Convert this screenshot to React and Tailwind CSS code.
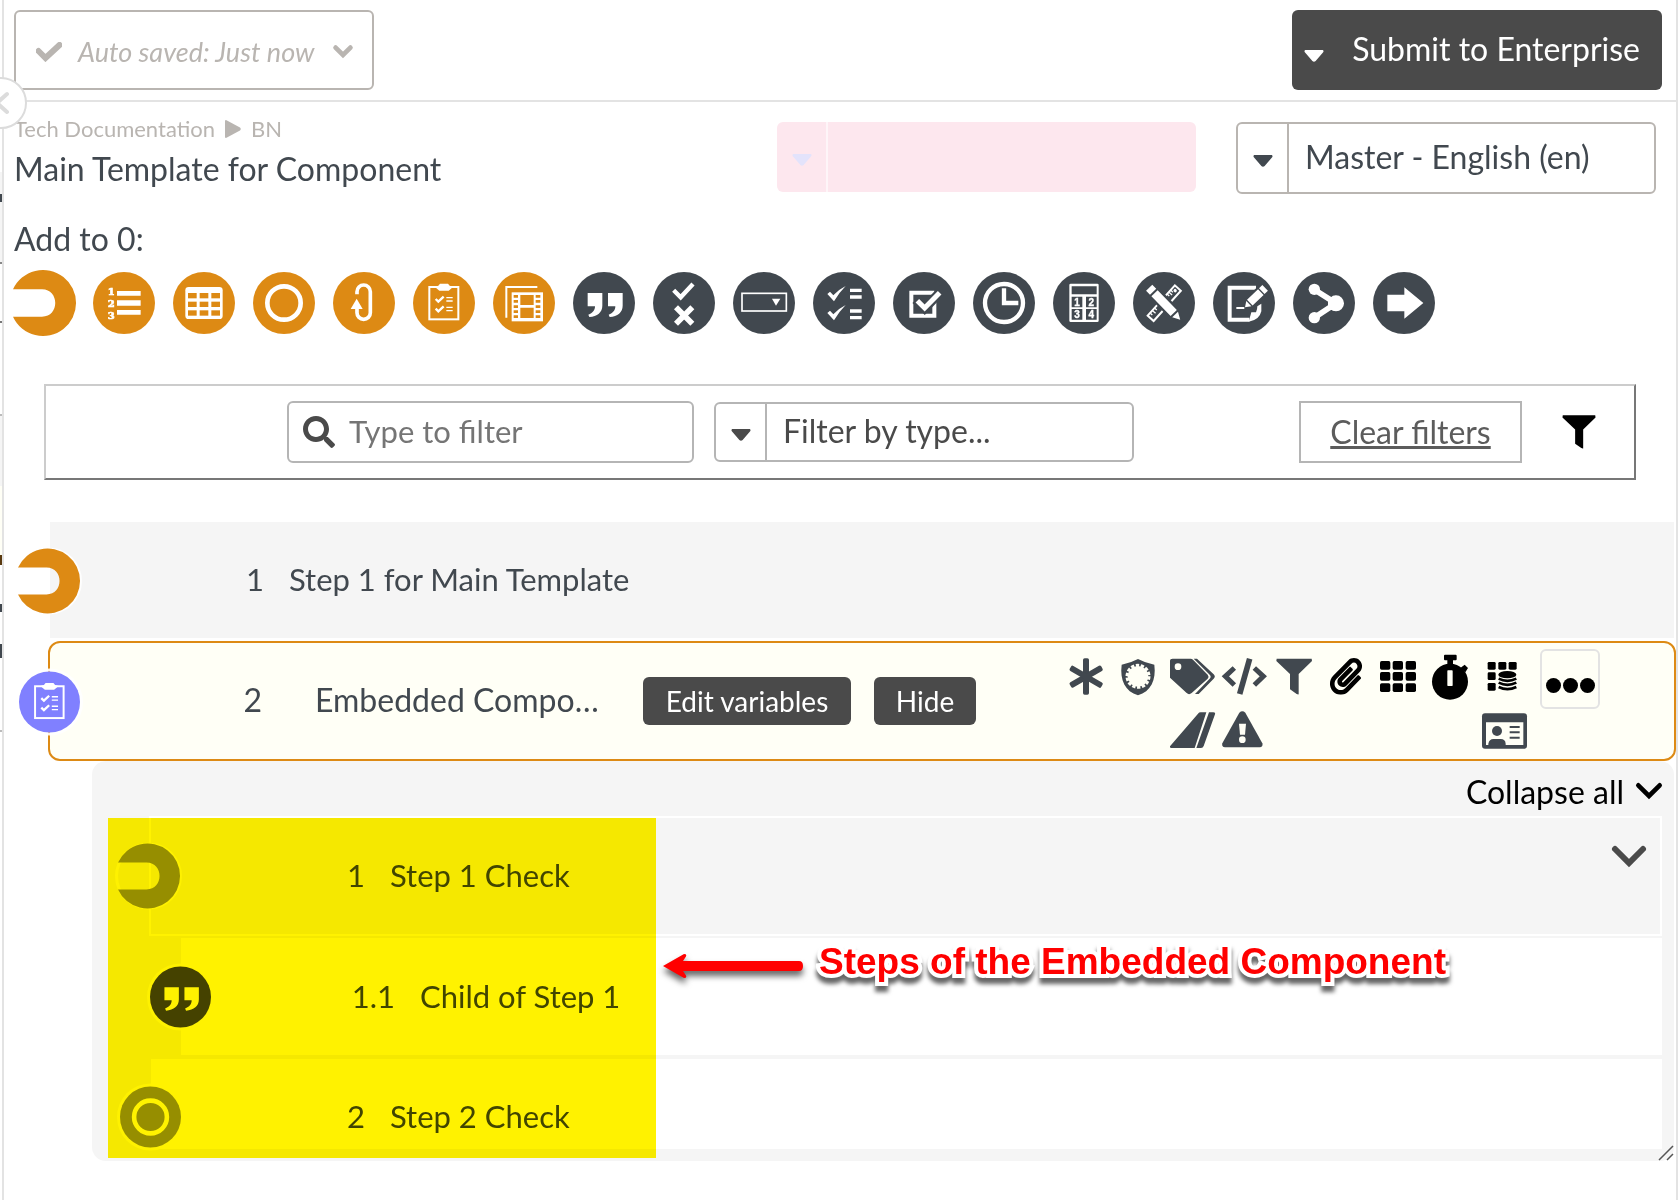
import React from "react";
import { FaPaperclip, FaSearch } from "react-icons/fa";

const FONT = "font-['Lato','Open_Sans',sans-serif]";

/* ---------- round step-type icons: drawn around the origin, radius 93 ---------- */

function Disc({ children, r = 93 }) {
  return (
    <svg viewBox="-93 -93 186 186" className="block size-full overflow-visible" aria-hidden="true">
      <circle r={r} fill="currentColor" />
      {children}
    </svg>
  );
}

const StepGlyph = () => (
  <svg viewBox="-93 -93 186 186" className="block size-full overflow-visible" aria-hidden="true">
    <path fill="currentColor" d="M-93 -41A99 99 0 1 1 -93 41H-6C47 41 47 -41 -6 -41Z" />
  </svg>
);

const NumberedGlyph = () => (
  <Disc>
    <g fill="#fff">
      <path d="M-21 -36H50V-22H-21ZM-21 -8H50V8H-21ZM-21 21H50V35H-21Z" />
      <g fontFamily="'DejaVu Serif'" fontWeight="700" fontSize="30" textAnchor="middle" stroke="#fff" strokeWidth="2">
        <text x="-38" y="-23">1</text>
        <text x="-38" y="13">2</text>
        <text x="-38" y="49">3</text>
      </g>
    </g>
  </Disc>
);

const TableGlyph = () => (
  <Disc>
    <rect x="-56" y="-48" width="112" height="96" rx="10" fill="#fff" />
    {[-30, -4, 22].map((y) =>
      [-48, -13, 22].map((x) => <rect key={`${x}${y}`} x={x} y={y} width="26" height="16" fill="currentColor" />)
    )}
  </Disc>
);

const RingGlyph = () => (
  <Disc>
    <circle r="50" fill="none" stroke="#fff" strokeWidth="14" />
  </Disc>
);

const LoopGlyph = () => (
  <Disc>
    <path d="M-21 -26V-34A20 20 0 0 1 19 -34V29A20 20 0 0 1 -21 29V14" fill="none" stroke="#fff" strokeWidth="11" />
    <path d="M-22 -13L-40 18H-4Z" fill="#fff" />
  </Disc>
);

const ClipboardGlyph = () => (
  <Disc>
    <g fill="none" stroke="#fff">
      <rect x="-44" y="-48" width="87" height="97" strokeWidth="6" />
      <path d="M-25 -12L-17 -4L-1 -19M-25 17L-17 25L-1 10" strokeWidth="7" />
      <path d="M7 -16H26M7 -6H26M7 13H26M7 23H26" strokeWidth="4" />
    </g>
    <path d="M-28 -49L-17 -52L-12 -58H12L17 -52L28 -49L14 -37H-14Z" fill="#fff" />
  </Disc>
);

const FilmGlyph = () => (
  <Disc>
    <path d="M-53 44V-48H40" fill="none" stroke="#fff" strokeWidth="6" />
    <rect x="-37" y="-32" width="94" height="87" fill="#fff" />
    <g fill="currentColor">
      <path d="M-11 -24H29V6H-11ZM-11 14H29V45H-11Z" />
      {[-24, -9, 7, 22, 37].map((y) => (
        <path key={y} d={`M-31 ${y}h13v8h-13ZM35 ${y}h14v8h-14Z`} />
      ))}
    </g>
  </Disc>
);

const QuoteGlyph = () => (
  <Disc>
    <path
      fill="#fff"
      d="M-49 -30H-5V8C-5 28 -20 40 -44 42L-47 35C-34 30 -27 22 -27 10H-49ZM12 -30H56V8C56 28 41 40 17 42L14 35C27 30 34 22 34 10H12Z"
    />
  </Disc>
);

const YesNoGlyph = () => (
  <Disc>
    <path d="M-31 -38L-10 -17L27 -57" fill="none" stroke="#fff" strokeWidth="13" />
    <path d="M-24 13L25 62M25 13L-24 62" fill="none" stroke="#fff" strokeWidth="17" />
  </Disc>
);

const DropdownGlyph = () => (
  <Disc>
    <rect x="-66" y="-29" width="133" height="53" fill="none" stroke="#fff" strokeWidth="5" />
    <path d="M24 -13H49L36 8Z" fill="#fff" />
  </Disc>
);

const ChecklistGlyph = () => (
  <Disc>
    <path
      fill="#fff"
      d="M-50 -27L-42 -34L-32 -23Q-14 -42 5 -51Q-14 -32 -30 -5ZM-50 30L-42 23L-32 34Q-14 15 5 6Q-14 25 -30 52ZM18 -43H53V-33H18ZM18 -23H53V-13H18ZM18 19H53V29H18ZM18 39H53V49H18Z"
    />
  </Disc>
);

const CheckboxGlyph = () => (
  <Disc>
    <path d="M31 -31H-38V38H31V-31" fill="none" stroke="#fff" strokeWidth="12" />
    <path d="M-25 -10L2 16L60 -44" fill="none" stroke="currentColor" strokeWidth="28" />
    <path d="M-20 -7L2 15L47 -31" fill="none" stroke="#fff" strokeWidth="15" />
  </Disc>
);

const ClockGlyph = () => (
  <Disc>
    <circle r="57" fill="none" stroke="#fff" strokeWidth="13" />
    <path d="M0 -44V0H43" fill="none" stroke="#fff" strokeWidth="13" />
  </Disc>
);

const CalculatorGlyph = () => (
  <Disc>
    <rect x="-44" y="-58" width="88" height="115" rx="4" fill="#fff" />
    <path fill="currentColor" d="M-37 -50H38V-26H-37ZM-37 -19H-5V13H-37ZM6 -19H38V13H6ZM-37 18H-5V50H-37ZM6 18H38V50H6Z" />
    <g fill="#fff" fontFamily="'Liberation Sans'" fontWeight="700" fontSize="30" textAnchor="middle" stroke="#fff" strokeWidth="1">
      <text x="-21" y="8">1</text>
      <text x="22" y="8">2</text>
      <text x="-21" y="45">3</text>
      <text x="22" y="45">4</text>
    </g>
  </Disc>
);

const ToolsGlyph = () => (
  <Disc>
    <g transform="rotate(-48)">
      <rect x="-61" y="-11" width="122" height="24" fill="none" stroke="#fff" strokeWidth="6" />
      <path d="M-50 -10V-2M-40 -10V2M-30 -10V-2M26 -10V-2M34 -10V2M42 -10V-2" stroke="#fff" strokeWidth="4" />
      <circle cx="50" cy="0" r="5" fill="#fff" />
    </g>
    <g transform="rotate(46)">
      <path d="M-66 -20H50L80 0L50 20H-66Z" fill="currentColor" />
      <path fill="#fff" d="M-64 -13H-47V13H-64ZM-41 -13H42V13H-41ZM48 -12L70 0L48 12Z" />
    </g>
  </Disc>
);

const NoteGlyph = () => (
  <Disc>
    <path d="M36 -46H-43V50H16" fill="none" stroke="#fff" strokeWidth="12" />
    <path d="M52 2V25Q46 52 14 56L22 28H20L36 28Q40 20 40 10Z" fill="#fff" />
    <g transform="translate(3 13) rotate(-44)">
      <path d="M-4 0L18 -18H92V18H18Z" fill="currentColor" />
      <path d="M0 0L16 -11V11ZM20 -12H66V12H20ZM70 -12H84V12H70Z" fill="#fff" />
    </g>
    <path d="M-23 15H1" stroke="#fff" strokeWidth="6" />
  </Disc>
);

const BranchGlyph = () => (
  <Disc>
    <path d="M-29 -40L36 1L-29 44" fill="none" stroke="#fff" strokeWidth="17" />
    <path d="M12 -14L36 -22V24L12 18Z" fill="#fff" />
    <circle cx="-29" cy="-41" r="17" fill="#fff" />
    <circle cx="-29" cy="44" r="17" fill="#fff" />
    <circle cx="36" cy="1" r="24" fill="#fff" />
  </Disc>
);

const ArrowGlyph = () => (
  <Disc>
    <path d="M-50 -25H1V-47L58 0L1 47V25H-50Z" fill="#fff" />
  </Disc>
);

const TOOLS = [
  ["Step", StepGlyph, true],
  ["Numbered list", NumberedGlyph, true],
  ["Table", TableGlyph, true],
  ["Circle", RingGlyph, true],
  ["Loop", LoopGlyph, true],
  ["Component", ClipboardGlyph, true],
  ["Media", FilmGlyph, true],
  ["Quote", QuoteGlyph],
  ["Pass or fail", YesNoGlyph],
  ["Dropdown", DropdownGlyph],
  ["Checklist", ChecklistGlyph],
  ["Checkbox", CheckboxGlyph],
  ["Time", ClockGlyph],
  ["Number", CalculatorGlyph],
  ["Tools", ToolsGlyph],
  ["Signature", NoteGlyph],
  ["Branch", BranchGlyph],
  ["Go to", ArrowGlyph],
];

/* ---------- actions of the selected row: 156 x 159 cells ---------- */

const PAPER = "#fffff6";
const FUNNEL = "M26 41H131L132 48L92 87V148Q90 149 86 147L66 133V87L25 48Z";

const ACTIONS = [
  {
    name: "Required",
    art: [0, 60, 120].map((a) => (
      <rect key={a} x="69" y="40" width="18" height="109" rx="5" transform={`rotate(${a} 78 95)`} />
    )),
  },
  {
    name: "Approval",
    art: (
      <>
        <path d="M78 42Q100 54 127 59C133 106 116 139 78 151C40 139 23 106 29 59Q56 54 78 42Z" />
        <circle cx="78" cy="94" r="31" fill={PAPER} />
        <circle cx="78" cy="94" r="33" fill="none" stroke={PAPER} strokeWidth="9" strokeDasharray="10 4.8" />
      </>
    ),
  },
  {
    name: "Tags",
    art: (
      <>
        <path d="M26 41H80Q84 41 87 44L131 89Q136 95 131 101L83 144Q75 151 68 144L18 98V48Q18 41 26 41Z" />
        <path d="M89 41H99L149 88Q156 95 149 101L104 147H93L137 101Q143 95 137 89Z" />
        <circle cx="42" cy="65" r="10" fill={PAPER} />
      </>
    ),
  },
  {
    name: "Code",
    art: (
      <>
        <path d="M55 69L28 94L55 120M115 69L142 94L115 120" fill="none" stroke="currentColor" strokeWidth="15" />
        <path d="M101 41L71 147" stroke="currentColor" strokeWidth="17" />
      </>
    ),
  },
  { name: "Filter", art: <path d={FUNNEL} /> },
  { name: "Attach", black: true, art: <FaPaperclip size={110} x="23" y="39" /> },
  {
    name: "Grid",
    black: true,
    art: [48, 81, 115].map((y) =>
      [24, 62, 101].map((x) => <rect key={`${x}-${y}`} x={x} y={y} width="31" height="26" rx="5" />)
    ),
  },
  {
    name: "Timer",
    black: true,
    art: (
      <>
        <circle cx="78" cy="110" r="54" />
        <path d="M60 32Q60 29 63 29H95Q98 29 98 32V43Q98 46 95 46H87V60H70V46H63Q60 46 60 43ZM108 70L122 59L132 69L124 82Z" />
        <rect x="70" y="76" width="16" height="47" rx="2" fill={PAPER} />
      </>
    ),
  },
  {
    name: "Data table",
    black: true,
    art: (
      <>
        {[[35, 51], [67, 51], [98, 51], [35, 82], [35, 114]].map(([x, y]) => (
          <rect key={`${x}-${y}`} x={x} y={y} width="24" height="23" rx="4" />
        ))}
        <ellipse cx="94" cy="89" rx="31" ry="15" fill={PAPER} />
        <ellipse cx="94" cy="89" rx="27" ry="11" />
        <path d="M68 101Q94 114 121 101M68 113Q94 126 121 113M68 126Q94 139 121 126" fill="none" stroke="currentColor" strokeWidth="8" />
      </>
    ),
  },
  {
    name: "Slope",
    second: true,
    place: "col-start-3",
    art: (
      <>
        <path d="M110 202H127L92 309H22Q16 309 18 304L102 206Q105 202 110 202Z" />
        <path d="M135 202H148Q155 202 153 208L119 303Q117 309 111 309H97Z" />
      </>
    ),
  },
  {
    name: "Warning",
    second: true,
    place: "col-start-4",
    art: (
      <>
        <path d="M70 203Q79 195 88 203L139 295Q142 306 131 307H27Q16 306 19 295Z" />
        <path d="M69 236H90L87 269H72Z" fill={PAPER} />
        <circle cx="79" cy="284" r="10" fill={PAPER} />
      </>
    ),
  },
  {
    name: "Contact card",
    second: true,
    place: "col-start-9",
    art: (
      <>
        <rect x="18" y="205" width="135" height="106" rx="9" />
        <path d="M30 232H142V300H30Z" fill={PAPER} />
        <circle cx="63" cy="258" r="15" />
        <path d="M37 300V296Q40 282 52 282H74Q88 282 89 296V300Z" />
        <path d="M101 246H131M101 262H131M101 278H131" stroke="currentColor" strokeWidth="6" />
      </>
    ),
  },
];

function Triangle({ className = "" }) {
  return (
    <svg viewBox="0 0 18 11" className={`h-3 w-5 ${className}`} fill="currentColor" aria-hidden="true">
      <path d="M1 0H17Q18.500 1 17 2.500L10.500 10Q9 11.500 7.500 10L1 2.500Q-.5 1 1 0Z" />
    </svg>
  );
}

function Chevron({ className, weight = 6 }) {
  return (
    <svg viewBox="0 0 34 22" className={`overflow-visible ${className}`} fill="none" stroke="currentColor" strokeWidth={weight} aria-hidden="true">
      <path d="M3 3L17 17L31 3" strokeLinecap="round" />
    </svg>
  );
}

function Picker({ label, value, className, cellClass }) {
  return (
    <label className={`flex overflow-hidden rounded-md ${className}`}>
      <span className={`flex w-[51px] shrink-0 items-center justify-center border-r-2 pt-[6px] ${cellClass}`}>
        <Triangle />
      </span>
      <select aria-label={label} className="min-w-0 flex-1 appearance-none bg-transparent px-4 pb-[2px]">
        <option>{value}</option>
      </select>
    </label>
  );
}

function Badge({ children, className }) {
  return <span className={`absolute top-1/2 size-[61px] -translate-y-1/2 rounded-full ring-[3px] ring-white/90 ${className}`}>{children}</span>;
}

function ChildRow({ number, title, glyph: Glyph, tone, className, children }) {
  return (
    <li className={`relative flex items-center pb-[2px] text-[31px] ${className}`}>
      <Badge className={tone}>
        <Glyph />
      </Badge>
      <span className="w-[214px] text-right">{number}</span>
      <span className="ml-[25px]">{title}</span>
      {children}
    </li>
  );
}

/* Edge of the neighbouring list: [height, fill] bands, top to bottom. */
const EDGE = [
  ["h-[172px]", "bg-white"],
  ["h-[22px]", "bg-[#f5f5f5]"],
  ["h-[8px]", "bg-[#41484f]"],
  ["h-[60px]", "bg-[#f5f5f5]"],
  ["h-[2px]", "bg-[#888]"],
  ["h-[57px]", "bg-white"],
  ["h-[2px]", "bg-[#777]"],
  ["h-[91px]", "bg-white"],
  ["h-[2px]", "bg-[#bbb]"],
  ["h-[70px]", "bg-[#f5f5f5]"],
  ["h-[69px]", "bg-[#fffff6]"],
  ["h-[10px]", "bg-[#5a3a10]"],
  ["h-[39px]", "bg-white"],
  ["h-[8px]", "bg-[#41484f]"],
  ["h-[32px]", "bg-white"],
  ["h-[14px]", "bg-[#41484f]"],
  ["h-[72px]", "bg-white"],
  ["h-[2px]", "bg-[#bbb]"],
];

export default function App() {
  return (
    <div className={`flex min-h-screen bg-white text-[32px] leading-9 text-[#41484f] ${FONT}`}>
      <div className="w-[2px] shrink-0" aria-hidden="true">
        {EDGE.map(([h, c], i) => (
          <div key={i} className={`${h} ${c}`} />
        ))}
      </div>

      <main className="relative min-w-0 flex-1 border-x-2 border-[#e3e3e3]">
        <header className="flex items-center justify-between border-b-2 border-[#e3e3e3] py-[10px] pr-[14px] pl-[10px]">
          <button className="flex h-20 w-[360px] items-center rounded-md border-2 border-[#b9b5b1] pt-1 pl-5 text-[27px] text-[#b9b5b1] italic">
            <svg viewBox="0 0 26 20" className="h-5 w-[26px]" fill="none" stroke="currentColor" strokeWidth="6" aria-hidden="true">
              <path d="M2.500 9L9.500 16L23.500 3" strokeLinecap="round" />
            </svg>
            <span className="ml-4 flex-1 text-left whitespace-nowrap">Auto saved: Just now</span>
            <Chevron className="mr-5 w-[18px]" weight={9} />
          </button>
          <button className="flex h-20 w-[370px] items-center justify-between rounded-md bg-[#4a4a4a] pr-[22px] pl-3 text-white">
            <Triangle className="mt-3" />
            <span className="mb-[2px] whitespace-nowrap">Submit to Enterprise</span>
          </button>
        </header>

        <button
          aria-label="Collapse panel"
          className="absolute top-[77px] -left-[29px] z-10 flex size-[52px] items-center justify-center rounded-full border-2 border-[#dcdcdc] bg-white [clip-path:inset(0_0_0_25px)]"
        >
          <svg viewBox="0 0 16 24" className="h-6 w-4" fill="none" stroke="#dcdcdc" strokeWidth="4" strokeLinecap="round" aria-hidden="true">
            <path d="M14 3L4 12L14 21" />
          </svg>
        </button>

        <section className="flex items-start justify-between pr-5 pl-[10px]">
          <div className="pt-[13px]">
            <nav aria-label="Breadcrumb" className="flex items-center gap-[10px] text-[22px] leading-7 text-[#b9b5b1]">
              <a href="#docs">Tech Documentation</a>
              <svg viewBox="0 0 16 18" className="h-[18px] w-4" fill="currentColor" aria-hidden="true">
                <path d="M1 0L15 7.500Q16.500 9 15 10.500L1 18Q0 18 0 17V1Q0 0 1 0Z" />
              </svg>
              <a href="#bn">BN</a>
            </nav>
            <h1 className="mt-2">Main Template for Component</h1>
          </div>
          <div className="flex gap-10 pt-5">
            <Picker
              label="Variant"
              value=""
              className="h-[70px] w-[419px] bg-[#fde7ee] text-[#e3e3fb]"
              cellClass="border-white/60"
            />
            <Picker
              label="Language"
              value="Master - English (en)"
              className="h-[72px] w-[420px] border-2 border-[#b9b5b1]"
              cellClass="border-[#b9b5b1]"
            />
          </div>
        </section>

        <h2 className="mt-[27px] pl-[10px]">Add to 0:</h2>
        <div className="mt-[15px] flex gap-[18px] pl-[9px]">
          {TOOLS.map(([name, Glyph, orange]) => (
            <button key={name} aria-label={name} className={`size-[62px] shrink-0 ${orange ? "text-[#dd8a14]" : "text-[#41484f]"}`}>
              <Glyph />
            </button>
          ))}
        </div>

        <section className="mx-10 mt-[50px] flex h-[96px] items-center border-2 border-t-[#ccc] border-r-[#777] border-b-[#777] border-l-[#ccc] text-[#4a4a4a]">
          <label className="ml-[241px] flex h-[62px] w-[407px] items-center rounded-md border-2 border-[#b5b5b5] pl-[14px]">
            <FaSearch size={32} className="shrink-0" aria-hidden="true" />
            <input
              type="text"
              aria-label="Type to filter"
              placeholder="Type to filter"
              className="ml-[14px] min-w-0 flex-1 bg-transparent pb-[2px] text-[31px] outline-none placeholder:text-[#757575]"
            />
          </label>
          <Picker
            label="Filter by type"
            value="Filter by type..."
            className="ml-5 h-[60px] w-[420px] border-2 border-[#b5b5b5]"
            cellClass="border-[#b5b5b5]"
          />
          <button className="mr-10 ml-auto h-[62px] w-[223px] border-2 border-[#b5b5b5] whitespace-nowrap text-[#5c5c5c] underline">
            Clear filters
          </button>
          <button aria-label="Filter" className="mr-[38px] text-black">
            <svg viewBox="24 40 109 110" className="size-[34px]" fill="currentColor" aria-hidden="true">
              <path d={FUNNEL} />
            </svg>
          </button>
        </section>

        <ol className="mt-[42px]">
          <li className="relative mr-[2px] ml-[46px] flex h-[116px] items-center bg-[#f5f5f5] pb-[2px] text-[31px]">
            <Badge className="-left-8 mt-px text-[#dd8a14]">
              <StepGlyph />
            </Badge>
            <span className="w-[214px] text-right">1</span>
            <span className="ml-[25px]">Step 1 for Main Template</span>
          </li>

          <li className="relative mt-[3px] ml-[44px] flex h-[120px] items-center rounded-[12px] border-2 border-[#dd8a14] bg-[#fffff6]">
            <Badge className="-left-[31px] mt-px text-[#8080ff]">
              <ClipboardGlyph />
            </Badge>
            <span className="w-[212px] pb-[2px] text-right">2</span>
            <span className="ml-[53px] w-[328px] truncate pr-[36px] pb-[2px]">Embedded Component</span>
            <button className="h-12 w-[208px] shrink-0 rounded-md bg-[#4a4a4a] text-[28px] whitespace-nowrap text-white">Edit variables</button>
            <button className="ml-[23px] h-12 w-[102px] shrink-0 rounded-md bg-[#4a4a4a] text-[28px] text-white">Hide</button>
            <div className="mt-[6px] ml-auto grid shrink-0 grid-cols-[repeat(9,52px)] grid-rows-[53px_53px]">
              {ACTIONS.map(({ name, art, black, second, place = "" }) => (
                <button key={name} aria-label={name} className={`${place} ${black ? "text-black" : "text-[#41484f]"}`}>
                  <svg viewBox={second ? "0 177 156 159" : "0 18 156 159"} className="block h-[53px] w-[52px]" fill="currentColor" aria-hidden="true">
                    {art}
                  </svg>
                </button>
              ))}
            </div>
            <button
              aria-label="More actions"
              className="mt-[6px] mr-[74px] ml-3 flex h-[60px] w-[60px] shrink-0 items-end justify-center gap-[2px] self-start rounded-md border-2 border-[#e3e3e3] pb-[14px]"
            >
              <i className="size-[15px] rounded-full bg-black" />
              <i className="size-[15px] rounded-full bg-black" />
              <i className="size-[15px] rounded-full bg-black" />
            </button>
          </li>

          <li className="relative mr-[2px] ml-[88px] rounded-[14px] bg-[#f5f5f5] pr-3 pb-3 pl-[57px]">
            <div className="flex h-[55px] items-center justify-end">
              <button className="flex items-center gap-3 pt-[6px] text-black">
                Collapse all
                <Chevron className="w-[26px]" />
              </button>
            </div>
            <ol>
              <ChildRow number="1" title="Step 1 Check" glyph={StepGlyph} tone="-left-[33px] text-[#969696]" className="h-[120px] border-2 border-white">
                <button aria-label="Collapse step" className="mt-7 mr-[14px] ml-auto self-start text-[#4a4a4a]">
                  <Chevron className="w-[34px]" />
                </button>
              </ChildRow>
              <ChildRow number="1.1" title="Child of Step 1" glyph={QuoteGlyph} tone="-left-[31px] text-[#454545]" className="mt-[2px] ml-8 h-[117px] bg-white" />
              <li className="mt-1 ml-[2px] h-[90px] bg-white">
                <ol>
                  <ChildRow number="2" title="Step 2 Check" glyph={RingGlyph} tone="-left-[31px] text-[#969696]" className="h-[116px]" />
                </ol>
              </li>
            </ol>

            <div className="pointer-events-none absolute top-[57px] bottom-[3px] left-4 w-[548px] bg-[#fff200] mix-blend-multiply" />

            <div className="pointer-events-none absolute top-[178px] left-[571px] flex items-center gap-[14px] text-[#f00]">
              <svg viewBox="0 0 142 40" className="h-10 w-[142px] overflow-visible drop-shadow-[0_5px_3px_rgba(0,0,0,0.6)]" fill="currentColor" aria-hidden="true">
                <path d="M0 24L21 12Q25 12 22 16L20 19H136Q140 19 140 24T136 29H20L22 32Q25 36 21 36Z" />
              </svg>
              <strong className="font-['Liberation_Sans',Arial,sans-serif] text-[37px] leading-[46px] font-bold whitespace-nowrap [-webkit-text-stroke:8px_white] [paint-order:stroke_fill] drop-shadow-[0_6px_2px_rgba(0,0,0,0.6)]">
                Steps of the Embedded Component
              </strong>
            </div>

            <svg viewBox="0 0 16 16" className="absolute right-0 bottom-0 size-4" stroke="#555" strokeWidth="1.5" aria-hidden="true">
              <path d="M1 15L15 1M9 15L15 9" />
            </svg>
          </li>
        </ol>
      </main>
    </div>
  );
}
